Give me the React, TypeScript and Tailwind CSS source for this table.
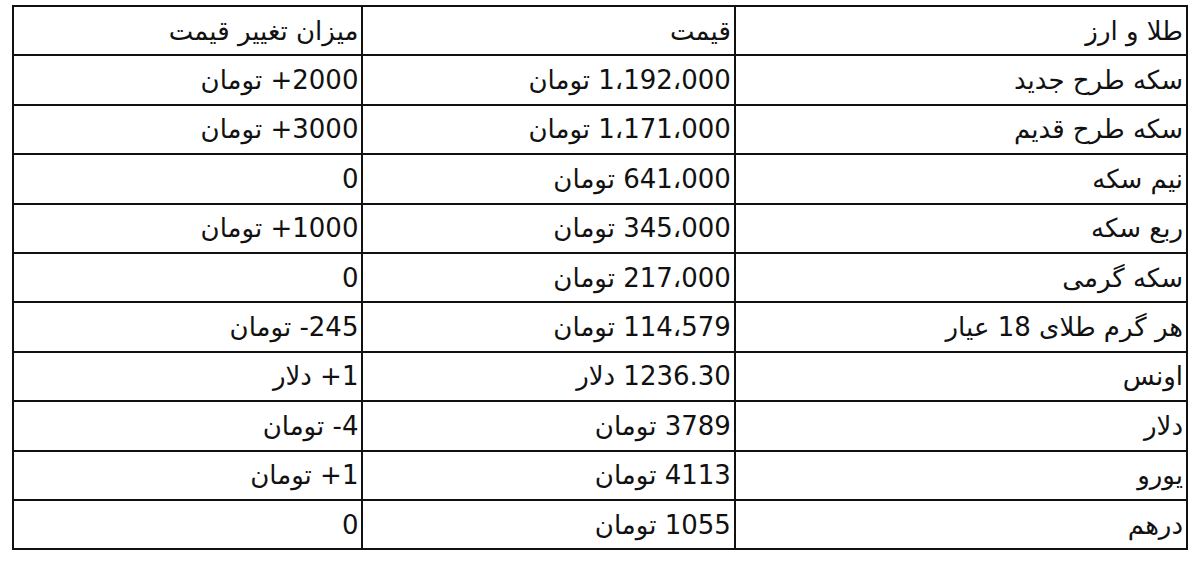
const rows: [string, string, string][] = [
  ["سکه طرح جدید", "1،192،000 تومان", "2000+ تومان"],
  ["سکه طرح قدیم", "1،171،000 تومان", "3000+ تومان"],
  ["نیم سکه", "641،000 تومان", "0"],
  ["ربع سکه", "345،000 تومان", "1000+ تومان"],
  ["سکه گرمی", "217،000 تومان", "0"],
  ["هر گرم طلای 18 عیار", "114،579 تومان", "245- تومان"],
  ["اونس", "1236.30 دلار", "1+ دلار"],
  ["دلار", "3789 تومان", "4- تومان"],
  ["یورو", "4113 تومان", "1+ تومان"],
  ["درهم", "1055 تومان", "0"],
];

const cell = "border-2 border-[#111] h-[49.4px] pl-[4px] pr-[3px] text-right align-middle";

export default function App() {
  return (
    <div className="min-h-[567px] bg-white pt-[5px] pl-[12px] pr-[12px] text-[#111] font-['DejaVu_Sans',sans-serif] text-[26px] leading-none">
      <table dir="rtl" className="w-[1176px] border-collapse">
        <thead>
          <tr>
            <td className={`${cell} w-[453px]`}>طلا و ارز</td>
            <td className={`${cell} w-[373px]`}>قیمت</td>
            <td className={`${cell} w-[350px]`}>میزان تغییر قیمت</td>
          </tr>
        </thead>
        <tbody>
          {rows.map(([name, price, change]) => (
            <tr key={name}>
              <td className={cell}>{name}</td>
              <td className={cell}>{price}</td>
              <td className={cell}>{change}</td>
            </tr>
          ))}
        </tbody>
      </table>
    </div>
  );
}
